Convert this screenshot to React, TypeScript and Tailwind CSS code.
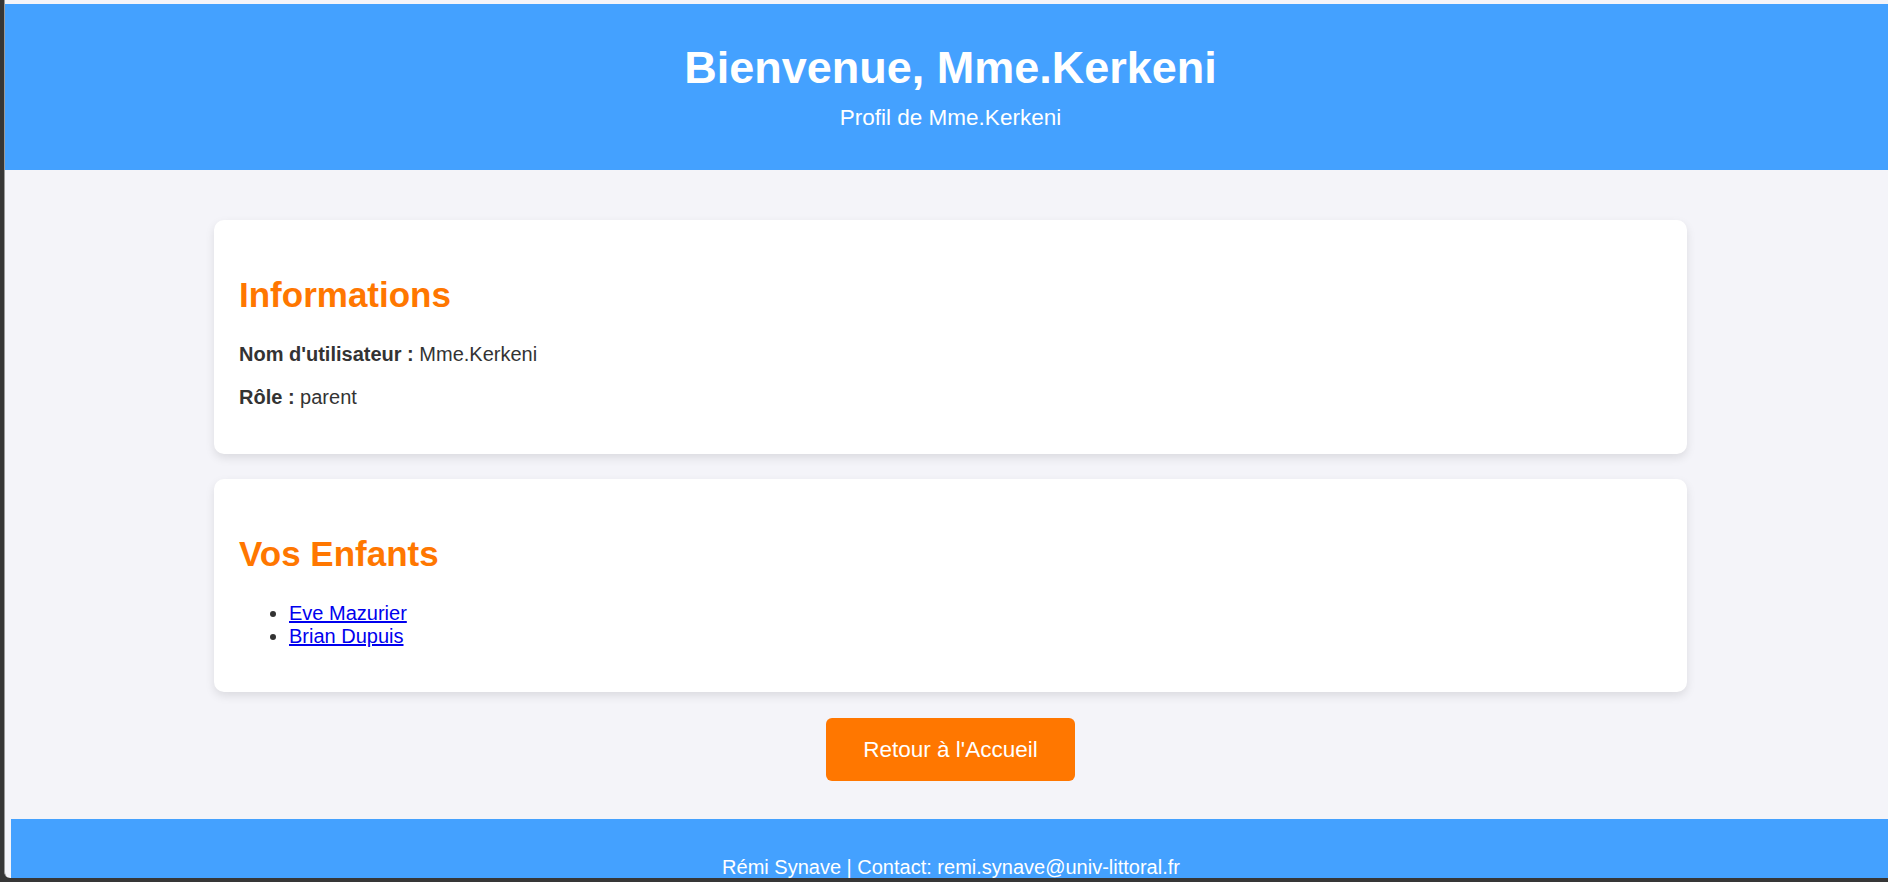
export default function App() {
  const children = ['Eve Mazurier', 'Brian Dupuis'];

  return (
    <div className="flex h-[882px] w-full overflow-hidden bg-[#363636] font-['Liberation_Sans',Arial,sans-serif]">
      {/* window frame: dark strip on the left and bottom */}
      <div className="ml-[4px] flex h-[878px] flex-1 flex-col overflow-hidden rounded-bl-[6px] border-l border-[#9a9a9a] bg-[#f4f4f9] pt-[4px] text-[#333]">
        <header className="bg-[#44a1ff] pb-[39px] pl-[8px] pt-[38px] text-center text-white">
          <h1 className="text-[45px] font-bold leading-[52px]">Bienvenue, Mme.Kerkeni</h1>
          <p className="mt-[11px] text-[22.5px] leading-[26px]">Profil de Mme.Kerkeni</p>
        </header>

        <main className="flex flex-col pl-[209px] pr-[201px] pt-[50px]">
          <section className="rounded-[10px] bg-white px-[25px] pb-[25px] pt-[25px] shadow-[0_4px_10px_rgba(0,0,0,0.1)]">
            <h2 className="mt-[30px] text-[35px] font-bold leading-[40px] text-[#ff7700]">Informations</h2>
            <p className="mt-[28px] text-[20px] leading-[23px]">
              <strong>Nom d'utilisateur :</strong> Mme.Kerkeni
            </p>
            <p className="mb-[20px] mt-[20px] text-[20px] leading-[23px]">
              <strong>Rôle :</strong> parent
            </p>
          </section>

          <section className="mt-[25px] rounded-[10px] bg-white px-[25px] pb-[25px] pt-[25px] shadow-[0_4px_10px_rgba(0,0,0,0.1)]">
            <h2 className="mt-[30px] text-[35px] font-bold leading-[40px] text-[#ff7700]">Vos Enfants</h2>
            <ul className="mb-[19px] mt-[28px] list-disc pl-[50px] text-[20px] leading-[23px]">
              {children.map((name) => (
                <li key={name}>
                  <a href="#" className="text-[#0000ee] underline">{name}</a>
                </li>
              ))}
            </ul>
          </section>

          <div className="mt-[26px] flex justify-center">
            <a href="#" className="flex h-[63px] w-[249px] items-center justify-center rounded-[6px] bg-[#ff7700] text-[22.5px] leading-[26px] text-white">
              Retour à l'Accueil
            </a>
          </div>
        </main>

        <footer className="ml-[6px] mt-[38px] shrink-0 bg-[#44a1ff] pl-[3px] pt-[37px] pb-[37px] text-center text-[20px] leading-[23px] text-white">
          Rémi Synave | Contact: remi.synave@univ-littoral.fr
        </footer>
      </div>
    </div>
  );
}
